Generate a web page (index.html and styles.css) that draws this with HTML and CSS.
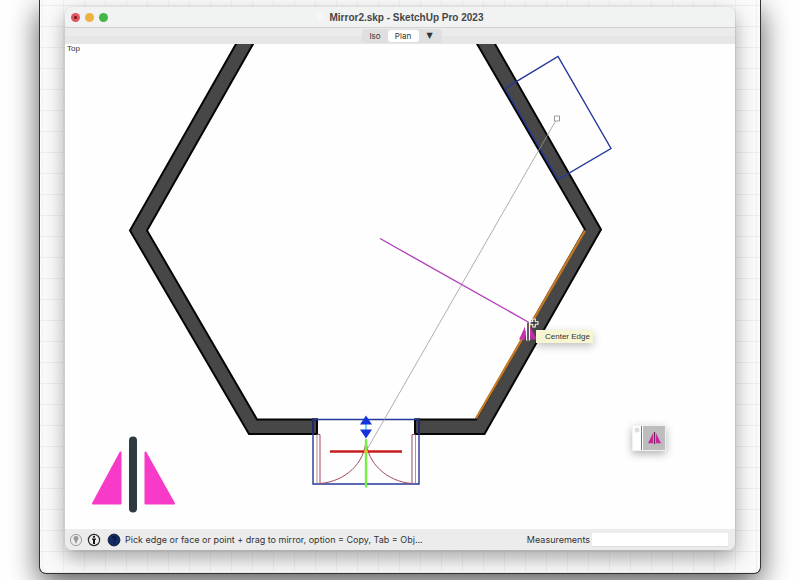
FILE: index.html
```html
<!DOCTYPE html>
<html lang="en">
<head>
<meta charset="utf-8">
<meta name="viewport" content="width=device-width, initial-scale=1">
<title>Mirror2.skp - SketchUp Pro 2023</title>
<link rel="stylesheet" href="styles.css">
</head>
<body>
<div class="desk">
  <main class="window">
    <header class="titlebar">
      <div class="lights">
        <button class="light close" type="button" aria-label="Close"></button>
        <button class="light minimize" type="button" aria-label="Minimize"></button>
        <button class="light zoom" type="button" aria-label="Zoom"></button>
      </div>
      <h1 class="title"><span class="doc"></span>Mirror2.skp - SketchUp Pro 2023</h1>
    </header>
    <nav class="scenes">
      <div class="tabs">
        <button class="tab" type="button">Iso</button>
        <button class="tab active" type="button">Plan</button>
        <button class="tab more" type="button">▼</button>
      </div>
    </nav>
    <section class="canvas">
      <svg class="drawing" viewBox="65 44 670 486" preserveAspectRatio="xMidYMid slice" aria-hidden="true">
        <g class="walls">
          <path d="M242 34 130 231 249 434.500H317V420H257L147 231 259 34Z"/>
          <path d="M471 34 585 230 476 420H416V434.500H484.500L601 230 489 34Z"/>
          <path d="M313 420h4v14.500h-4zM415 420h4v14.500h-4z"/>
        </g>
        <path class="highlight" d="M585 231 476 419"/>
        <g class="blue">
          <path d="M505 89 558 57 611 149 558 180Z"/>
          <path d="M313 420H419V484.500H313Z"/>
        </g>
        <g class="door">
          <path d="M320 435V484M412 435V484M317 435h3M412 435h3"/>
          <path d="M317 435V484M415.500 435V484" opacity=".65"/>
          <path d="M320 484C345 482 365 464 366 440C367 464 387 482 412 484"/>
        </g>
        <path class="guide" d="M557 119 367 450"/>
        <path class="guide-end" d="M554.500 116.500h5v5h-5z"/>
        <path class="mirror-line" d="M380 239 529 323"/>
        <path d="M330 452H402" stroke="#c51d1c" stroke-width="2.400"/>
        <path d="M366 440V488" stroke="#77ef45" stroke-width="2.400"/>
        <path d="M366 422V432" stroke="#72d6ff" stroke-width="2"/>
        <circle cx="366" cy="452" r="1.800" fill="#e8c52b"/>
        <path d="M366 416 372 425H360ZM366 439 372 430H360Z" fill="#1634dc"/>
        <g fill="#f73ac7" stroke="#f73ac7" stroke-width="2" stroke-linejoin="round">
          <path d="M120.500 453V504H93Z"/>
          <path d="M145.500 453V504H174Z"/>
        </g>
        <path d="M133 441V509" stroke="#2d3a42" stroke-width="8" stroke-linecap="round"/>
        <g class="cursor">
          <path d="M525 327V340H519ZM530 327V340H537Z" fill="#c532a8"/>
          <path d="M528 323V341" stroke="#fff" stroke-width="4"/>
          <path d="M528 323V341" stroke="#262b35" stroke-width="1.500"/>
          <path d="M534 319V328M529.500 323.500H538.500" stroke="#fff" stroke-width="3.500"/>
          <path d="M534 320V327M530.500 323.500H537.500" stroke="#252525" stroke-width="1.300"/>
        </g>
      </svg>
      <span class="view-name">Top</span>
      <div class="tooltip" role="tooltip">Center Edge</div>
      <div class="palette">
        <button class="grip" type="button" aria-label="Close palette"></button>
        <button class="tool" type="button" aria-label="Mirror">
          <svg viewBox="0 0 16 14" aria-hidden="true">
            <path d="M6.500 1V12H1ZM9.500 1V12H15Z" fill="#cb239b"/>
            <path d="M8 0V13" stroke="#5b294f" stroke-width="1.300"/>
          </svg>
        </button>
      </div>
    </section>
    <footer class="status">
      <button class="info" type="button" aria-label="Location">
        <svg viewBox="0 0 14 14" aria-hidden="true">
          <circle cx="7" cy="7" r="5.600" fill="none" stroke="#9c9c9c"/>
          <circle cx="7" cy="5.300" r="2.400" fill="#999"/>
          <path d="M5 6 7 11 9 6Z" fill="#999"/>
        </svg>
      </button>
      <button class="info" type="button" aria-label="Credits">
        <svg viewBox="0 0 14 14" aria-hidden="true">
          <circle cx="7" cy="7" r="5.600" fill="none" stroke="#292929" stroke-width="1.200"/>
          <circle cx="7" cy="3.800" r="1.100" fill="#111"/>
          <path d="M5 5.500H9V6.500L8 7V11H6V7L5 6.500Z" fill="#111"/>
        </svg>
      </button>
      <button class="info help" type="button" aria-label="Help">
        <svg viewBox="0 0 14 14" aria-hidden="true">
          <circle cx="7" cy="7" r="5.900" fill="#152a68" stroke="#17203f"/>
          <path d="M5.200 5.400C5.200 3.200 8.800 3.200 8.800 5.400C8.800 6.700 7 6.600 7 8.200M7 9.500V10.600" fill="none" stroke="#071336" stroke-width="1.300"/>
        </svg>
      </button>
      <p class="hint">Pick edge or face or point + drag to mirror, option = Copy, Tab = Obj...</p>
      <label class="measure-label" for="measure">Measurements</label>
      <input class="measure" id="measure" type="text">
    </footer>
  </main>
</div>
</body>
</html>
```
FILE: styles.css
```css
* {
  box-sizing: border-box;
}

body {
  margin: 0;
  height: 100vh;
  padding: 0 39px 6px;
  overflow: hidden;
  background: #fff;
  color: #333;
  font-family: Inter, "Liberation Sans", sans-serif;
  font-size: 9px;
}

button,
input {
  margin: 0;
  padding: 0;
  border: 0;
  background: none;
  color: inherit;
  font: inherit;
}

.desk {
  height: 100%;
  padding: 7px 25px 23px;
  border: 1px solid #333;
  border-top: 0;
  border-radius: 0 0 7px 7px;
  background-color: #fafafa;
  background-image:
    linear-gradient(90deg, #f0f0f0 1px, transparent 1px),
    linear-gradient(#ededed 1px, transparent 1px);
  background-size: 21px 21px;
  background-position: 23px 5px;
  box-shadow: 0 10px 30px rgba(0, 0, 0, 0.65);
}

.window {
  display: flex;
  flex-direction: column;
  height: 100%;
  overflow: hidden;
  border-radius: 7px;
  background: #fff;
  box-shadow: 0 0 1px rgba(0, 0, 0, 0.3), 0 8px 20px rgba(0, 0, 0, 0.34);
}

.titlebar {
  display: grid;
  grid-template-columns: 1fr auto 1fr;
  align-items: center;
  height: 21px;
  border-bottom: 1px solid #d2d2d2;
  background: #f1f2f2;
}

.lights {
  display: flex;
  gap: 5px;
  padding-left: 6px;
}

.light {
  width: 9px;
  height: 9px;
  border-radius: 50%;
}

.close {
  background: radial-gradient(circle, #7c1520 0 1px, #df5560 2px);
}

.minimize {
  background: #edb340;
}

.zoom {
  background: #45b649;
}

.title {
  display: flex;
  align-items: center;
  gap: 6px;
  margin: 0;
  font-family: "Liberation Sans", sans-serif;
  font-size: 10px;
  font-weight: 700;
  color: #464646;
}

.doc {
  width: 7px;
  height: 8px;
  background: #f6f6f6;
}

.scenes {
  display: flex;
  justify-content: center;
  align-items: center;
  height: 16px;
  padding-left: 3px;
  background: linear-gradient(#ebebeb 0 50%, #e6e6e6 50%);
}

.tabs {
  display: flex;
  align-items: center;
  height: 14px;
  padding: 0 1px;
  border-radius: 4px;
  background: #dfdfdf;
}

.tab {
  width: 25px;
  height: 12px;
  border-radius: 3px;
  font-size: 8px;
  line-height: 12px;
}

.active {
  width: 31px;
  background: #fff;
}

.more {
  width: 22px;
  font-family: "DejaVu Sans", sans-serif;
}

.canvas {
  position: relative;
  flex: 1;
  min-height: 0;
  background: #fefefe;
}

.drawing {
  display: block;
  width: 100%;
  height: 100%;
  fill: none;
}

.walls {
  fill: #474747;
  stroke: #050505;
  stroke-width: 2;
}

.highlight {
  stroke: #c47a25;
  stroke-width: 2.4;
}

.blue {
  stroke: #24389a;
  stroke-width: 1.4;
}

.door {
  stroke: #a34b5a;
  stroke-width: 1;
}

.guide {
  stroke: #999;
  stroke-width: 0.8;
}

.guide-end {
  fill: #fff;
  stroke: #999;
}

.mirror-line {
  stroke: #b444bd;
  stroke-width: 1.4;
}

.view-name {
  position: absolute;
  top: 0;
  left: 2px;
  font-family: "Liberation Sans", sans-serif;
  font-size: 8px;
}

.tooltip {
  position: absolute;
  top: 59%;
  left: 70.300%;
  padding: 0 3px 0 9px;
  background: #f7f5d2;
  font-family: "Liberation Sans", sans-serif;
  font-size: 8px;
  line-height: 13px;
  box-shadow: 0 3px 9px rgba(0, 0, 0, 0.25);
}

.palette {
  position: absolute;
  right: 69px;
  bottom: 78px;
  display: flex;
  gap: 1px;
  width: 34px;
  height: 26px;
  border: 1px solid #f1f1f1;
  background: #fff;
  box-shadow: 0 3px 9px rgba(0, 0, 0, 0.3);
}

.grip {
  width: 9px;
  border-right: 1px solid #777;
  background: radial-gradient(circle at 4px 4px, #ddd 0 2px, #fff 3px);
}

.tool {
  display: grid;
  flex: 1;
  place-items: center;
  background: #bdbdbd;
}

.tool svg {
  width: 15px;
  height: 13px;
}

.status {
  display: flex;
  align-items: center;
  height: 21px;
  padding: 0 7px 0 4px;
  background: #ececec;
}

.info {
  width: 14px;
  height: 14px;
  margin-right: 4px;
}

.info svg {
  display: block;
}

.help {
  margin-left: 2px;
}

.hint {
  flex: 1;
  margin: 0;
  overflow: hidden;
  white-space: nowrap;
}

.measure {
  width: 136px;
  height: 14px;
  margin-left: 2px;
  border-bottom: 1px solid #ddd;
  background: #fff;
}
```
